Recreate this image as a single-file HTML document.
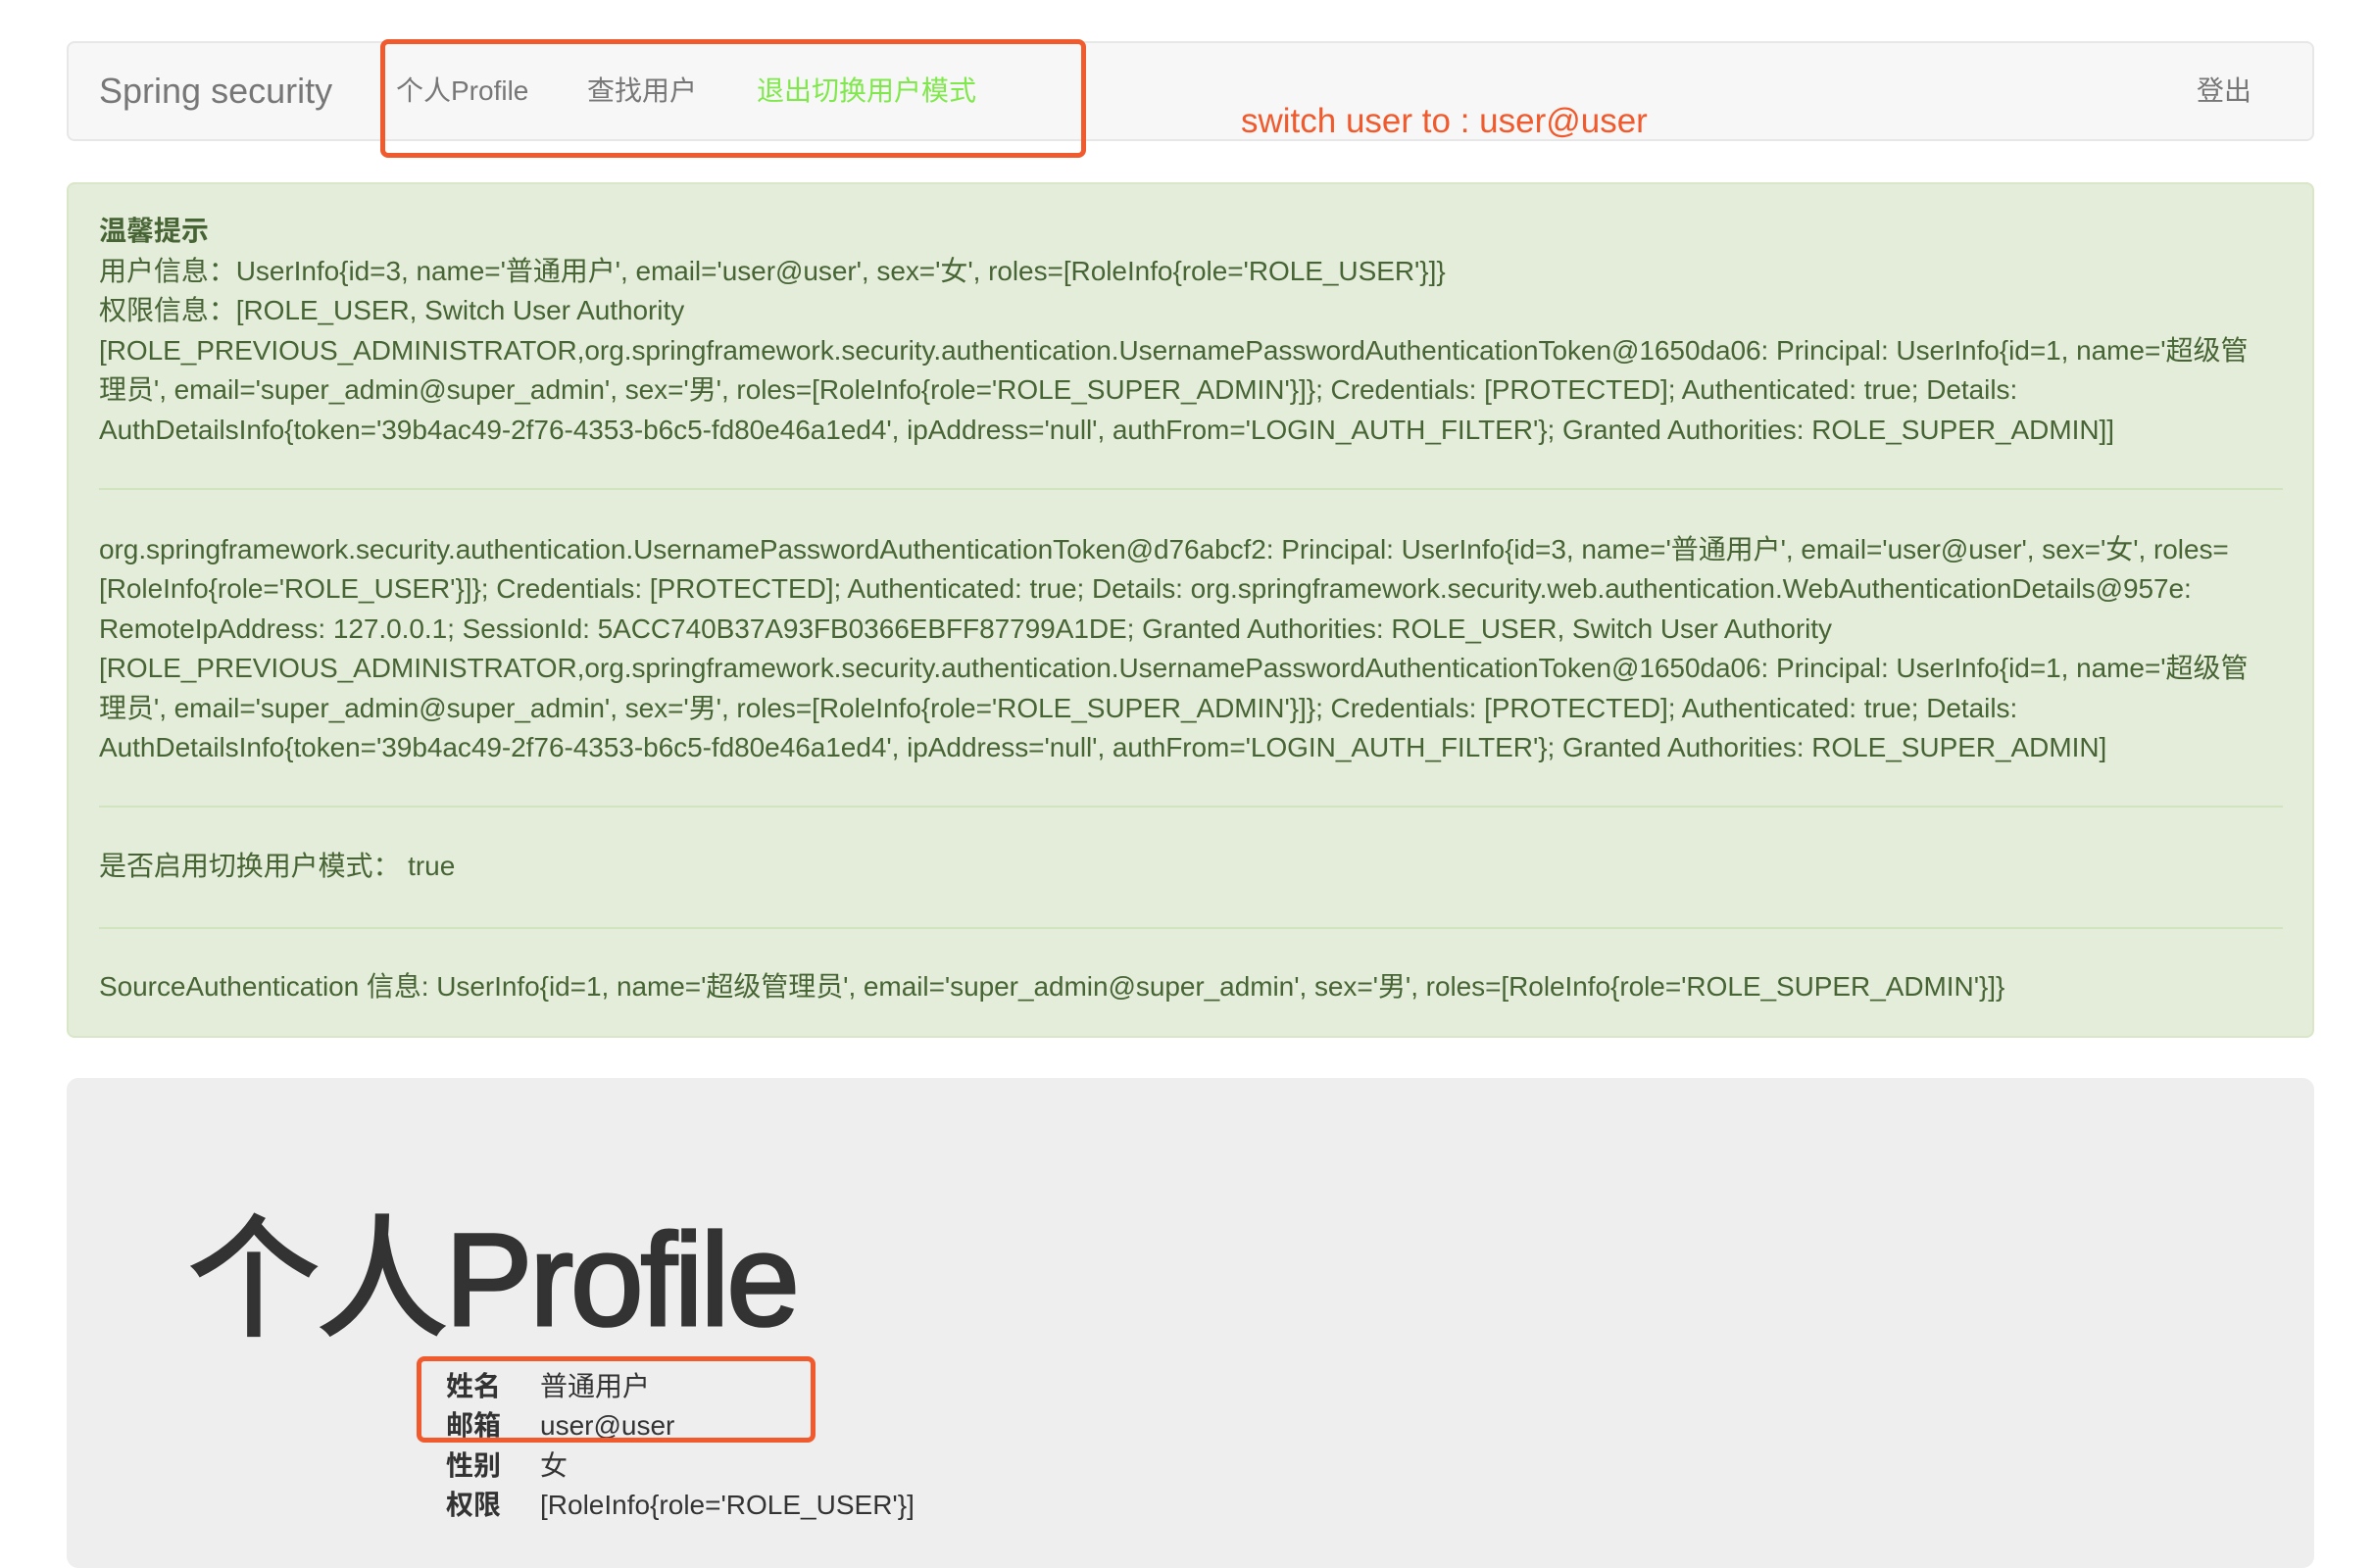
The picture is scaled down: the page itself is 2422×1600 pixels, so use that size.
<!DOCTYPE html>
<html><head><meta charset="utf-8"><style>
*{box-sizing:border-box;margin:0;padding:0}
body{width:2422px;height:1548px;overflow:hidden;background:#fff;font-family:"Liberation Sans","Noto Sans CJK SC",sans-serif;font-size:28px;line-height:40px;color:#333;position:relative}
.nav{position:absolute;left:68px;top:42px;width:2293px;height:102px;background:#f7f7f7;border:2px solid #e7e7e7;border-radius:8px}
.t{position:absolute;white-space:nowrap}
.brand{left:101px;top:70px;font-size:36px;color:#777;line-height:46px}
.nl{font-size:28px;color:#777;top:73px}
.box{position:absolute;border:5px solid #f05a2d;border-radius:8px}
.alert{position:absolute;left:68px;top:186px;width:2293px;height:873px;background:#e4edda;border:2px solid #d9e6c8;border-radius:8px}
.a{position:absolute;left:101px;color:#476435;white-space:nowrap;font-size:28px;line-height:40.5px;letter-spacing:-0.05px}
.hr{position:absolute;left:101px;width:2228px;height:2px;background:#d2e3bf}
.jumbo{position:absolute;left:68px;top:1100px;width:2293px;height:500px;background:#eee;border-radius:12px}
.h1{left:192px;top:1232px;font-size:134px;line-height:150px;color:#333;letter-spacing:-3px;-webkit-text-stroke:3px #333}
.lb{left:455px;font-weight:bold}
.vl{left:551px}
</style></head><body>
<div class="nav"></div>
<div class="t brand">Spring security</div>
<div class="t nl" style="left:404px">个人Profile</div>
<div class="t nl" style="left:599px">查找用户</div>
<div class="t nl" style="left:772px;color:#7fe84a">退出切换用户模式</div>
<div class="t nl" style="left:2241px">登出</div>
<div class="box" style="left:388px;top:40px;width:720px;height:121px"></div>
<div class="t" style="left:1266px;top:102px;font-size:35px;line-height:44px;color:#f05a2d">switch user to : user@user</div>

<div class="alert"></div>
<div class="a" style="top:216px;font-weight:bold">温馨提示</div>
<div class="a" style="top:257px">用户信息：UserInfo{id=3, name='普通用户', email='user@user', sex='女', roles=[RoleInfo{role='ROLE_USER'}]}</div>
<div class="a" style="top:297px">权限信息：[ROLE_USER, Switch User Authority</div>
<div class="a" style="top:338px">[ROLE_PREVIOUS_ADMINISTRATOR,org.springframework.security.authentication.UsernamePasswordAuthenticationToken@1650da06: Principal: UserInfo{id=1, name='超级管</div>
<div class="a" style="top:378px">理员', email='super_admin@super_admin', sex='男', roles=[RoleInfo{role='ROLE_SUPER_ADMIN'}]}; Credentials: [PROTECTED]; Authenticated: true; Details:</div>
<div class="a" style="top:419px">AuthDetailsInfo{token='39b4ac49-2f76-4353-b6c5-fd80e46a1ed4', ipAddress='null', authFrom='LOGIN_AUTH_FILTER'}; Granted Authorities: ROLE_SUPER_ADMIN]]</div>
<div class="hr" style="top:498px"></div>
<div class="a" style="top:541px">org.springframework.security.authentication.UsernamePasswordAuthenticationToken@d76abcf2: Principal: UserInfo{id=3, name='普通用户', email='user@user', sex='女', roles=</div>
<div class="a" style="top:581px">[RoleInfo{role='ROLE_USER'}]}; Credentials: [PROTECTED]; Authenticated: true; Details: org.springframework.security.web.authentication.WebAuthenticationDetails@957e:</div>
<div class="a" style="top:622px">RemoteIpAddress: 127.0.0.1; SessionId: 5ACC740B37A93FB0366EBFF87799A1DE; Granted Authorities: ROLE_USER, Switch User Authority</div>
<div class="a" style="top:662px">[ROLE_PREVIOUS_ADMINISTRATOR,org.springframework.security.authentication.UsernamePasswordAuthenticationToken@1650da06: Principal: UserInfo{id=1, name='超级管</div>
<div class="a" style="top:703px">理员', email='super_admin@super_admin', sex='男', roles=[RoleInfo{role='ROLE_SUPER_ADMIN'}]}; Credentials: [PROTECTED]; Authenticated: true; Details:</div>
<div class="a" style="top:743px">AuthDetailsInfo{token='39b4ac49-2f76-4353-b6c5-fd80e46a1ed4', ipAddress='null', authFrom='LOGIN_AUTH_FILTER'}; Granted Authorities: ROLE_SUPER_ADMIN]</div>
<div class="hr" style="top:822px"></div>
<div class="a" style="top:864px">是否启用切换用户模式：&nbsp;true</div>
<div class="hr" style="top:946px"></div>
<div class="a" style="top:987px">SourceAuthentication 信息: UserInfo{id=1, name='超级管理员', email='super_admin@super_admin', sex='男', roles=[RoleInfo{role='ROLE_SUPER_ADMIN'}]}</div>

<div class="jumbo"></div>
<div class="t h1">个人Profile</div>
<div class="t lb" style="top:1395px">姓名</div><div class="t vl" style="top:1395px">普通用户</div>
<div class="t lb" style="top:1435px">邮箱</div><div class="t vl" style="top:1435px">user@user</div>
<div class="t lb" style="top:1476px">性别</div><div class="t vl" style="top:1476px">女</div>
<div class="t lb" style="top:1516px">权限</div><div class="t vl" style="top:1516px">[RoleInfo{role='ROLE_USER'}]</div>
<div class="box" style="left:425px;top:1384px;width:407px;height:88px"></div>
</body></html>
